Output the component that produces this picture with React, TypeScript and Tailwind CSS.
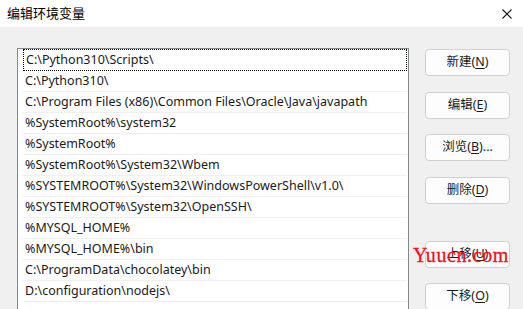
import React from 'react'

const paths = [
  'C:\\Python310\\Scripts\\',
  'C:\\Python310\\',
  'C:\\Program Files (x86)\\Common Files\\Oracle\\Java\\javapath',
  '%SystemRoot%\\system32',
  '%SystemRoot%',
  '%SystemRoot%\\System32\\Wbem',
  '%SYSTEMROOT%\\System32\\WindowsPowerShell\\v1.0\\',
  '%SYSTEMROOT%\\System32\\OpenSSH\\',
  '%MYSQL_HOME%',
  '%MYSQL_HOME%\\bin',
  'C:\\ProgramData\\chocolatey\\bin',
  'D:\\configuration\\nodejs\\',
  '',
]

const font = { fontFamily: '"Noto Sans", "Noto Sans CJK SC", sans-serif' }

const Btn = ({ label, k, tail = '', className = '' }: { label: string; k: string; tail?: string; className?: string }) => (
  <button
    className={`h-[27px] w-[85px] rounded-[4px] border border-[#d0d0d0] bg-[#fdfdfd] text-[12.5px] text-[#1a1a1a] leading-none ${className}`}
  >
    {label}(<span className="underline underline-offset-2">{k}</span>){tail}
  </button>
)

export default function App() {
  return (
    <div className="relative w-[523px] h-[309px] overflow-hidden bg-[#f0f0f0]" style={font}>
      <div className="h-[27px] bg-white flex items-center justify-between pl-[7px] pr-[10px]">
        <span className="text-[13px] text-black">编辑环境变量</span>
        <svg width="10" height="10" viewBox="0 0 10 10" className="mr-[1px]">
          <path d="M0.5 0.5L9.5 9.5M9.5 0.5L0.5 9.5" stroke="#111" strokeWidth="1.1" />
        </svg>
      </div>
      <div className="flex pl-[17px] pt-[21px]">
        <div className="w-[392px] h-[280px] bg-white border border-[#828790] border-b-0 pl-[5px] pr-[1px]">
          {paths.map((p, i) => (
            <div
              key={i}
              className={`flex items-center pl-[2px] text-[12.5px] text-[#1a1a1a] ${
                i === 0 ? 'h-[22px] border border-dotted border-black' : 'h-[21px] border-b border-[#f0f0f0]'
              }`}
            >
              {p}
            </div>
          ))}
        </div>
        <div className="flex flex-col ml-[16px] pt-[1px]">
          <Btn label="新建" k="N" />
          <Btn label="编辑" k="E" className="mt-[16px]" />
          <Btn label="浏览" k="B" tail="..." className="mt-[15px]" />
          <Btn label="删除" k="D" className="mt-[16px]" />
          <Btn label="上移" k="U" className="mt-[37px]" />
          <Btn label="下移" k="O" className="mt-[15px]" />
        </div>
      </div>
      <div
        className="absolute left-[413px] top-[245px] text-[20px] text-[#f01020] tracking-[0.6px] leading-none"
        style={{ fontFamily: '"Liberation Serif", serif', WebkitTextStroke: '0.3px #f01020' }}
      >
        Yuucn.com
      </div>
    </div>
  )
}
